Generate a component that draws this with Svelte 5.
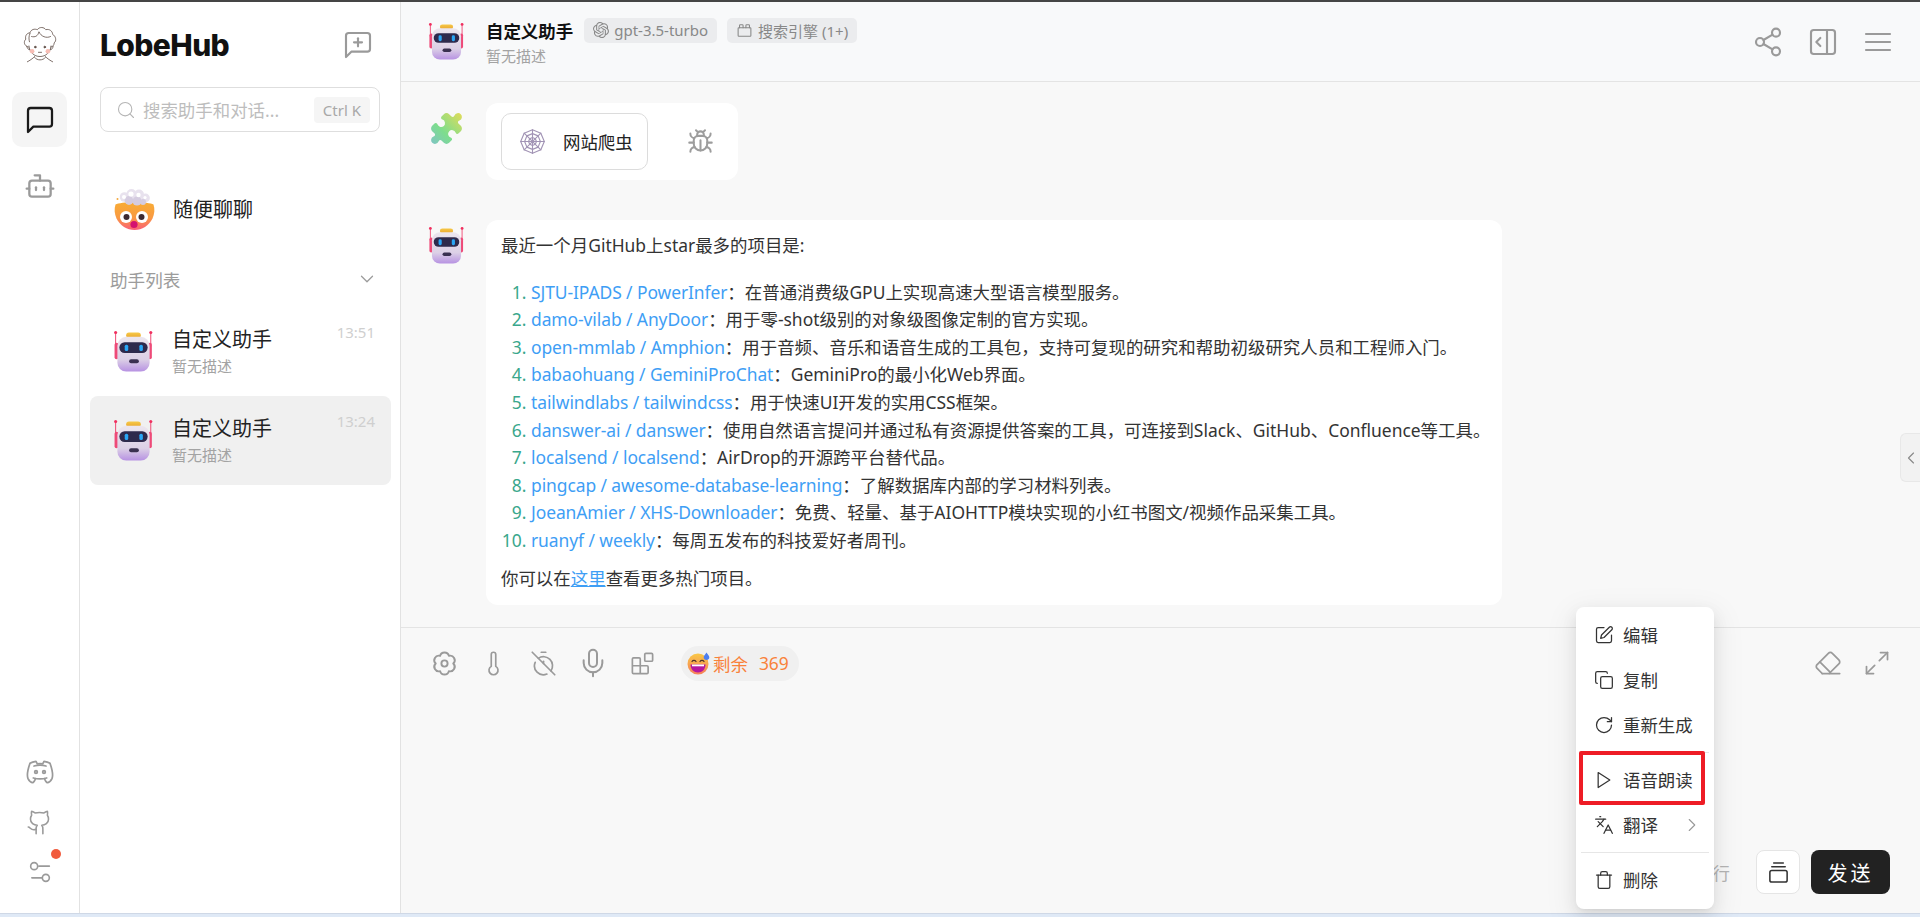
<script lang="ts">
  const circle = (x: number, y: number, r: number) =>
    `M${x - r} ${y}a${r} ${r} 0 1 0 ${2 * r} 0a${r} ${r} 0 1 0 ${-2 * r} 0`;

  const paths: Record<string, string[]> = {
    chat: ["M21 15a2 2 0 0 1-2 2H7l-4 4V5a2 2 0 0 1 2-2h14a2 2 0 0 1 2 2z"],
    chatPlus: ["M21 15a2 2 0 0 1-2 2H7l-4 4V5a2 2 0 0 1 2-2h14a2 2 0 0 1 2 2z", "M12 7v6", "M9 10h6"],
    bot: ["M12 8V4H8", "M6 8h12a2 2 0 0 1 2 2v8a2 2 0 0 1-2 2H6a2 2 0 0 1-2-2v-8a2 2 0 0 1 2-2z", "M2 14h2", "M20 14h2", "M15 13v2", "M9 13v2"],
    discord: [
      circle(9, 12, 1),
      circle(15, 12, 1),
      "M7.5 7.5c3.5-1 5.5-1 9 0",
      "M7 16.5c3.5 1 6.5 1 10 0",
      "M15.5 17c0 1 1.5 3 2 3c1.5 0 2.833-1.667 3.5-3c.667-1.667.5-5.833-1.5-11.5c-1.457-1.015-3-1.34-4.5-1.5l-.972 1.923a11.913 11.913 0 0 0-4.053 0l-.975-1.923c-1.5.16-3.043.485-4.5 1.5c-2 5.667-2.167 9.833-1.5 11.5c.667 1.333 2 3 3.5 3c.5 0 2-2 2-3",
    ],
    github: [
      "M15 22v-4a4.8 4.8 0 0 0-1-3.5c3 0 6-2 6-5.5.08-1.25-.27-2.48-1-3.5.28-1.15.28-2.35 0-3.5 0 0-1 0-3 1.5-2.64-.5-5.36-.5-8 0C6 2 5 2 5 2c-.3 1.15-.3 2.35 0 3.5A5.403 5.403 0 0 0 4 9c0 3.5 3 5.5 6 5.5-.39.49-.68 1.05-.85 1.65-.17.6-.22 1.23-.15 1.85v4",
      "M9 18c-4.51 2-5-2-7-2",
    ],
    sliders: ["M20 7h-9", "M14 17H5", circle(17, 17, 3), circle(7, 7, 3)],
    search: [circle(11, 11, 8), "m21 21-4.3-4.3"],
    down: ["m6 9 6 6 6-6"],
    right: ["m9 18 6-6-6-6"],
    left: ["m15 18-6-6 6-6"],
    share: [circle(18, 5, 3), circle(6, 12, 3), circle(18, 19, 3), "M8.59 13.51 15.42 17.49", "M15.41 6.51 8.59 10.49"],
    panel: ["M5 3h14a2 2 0 0 1 2 2v14a2 2 0 0 1-2 2H5a2 2 0 0 1-2-2V5a2 2 0 0 1 2-2z", "M15 3v18", "m10 15-3-3 3-3"],
    menu: ["M3 6h18", "M3 12h18", "M3 18h18"],
    brick: ["M4 8h16a1 1 0 0 1 1 1v10a1 1 0 0 1-1 1H4a1 1 0 0 1-1-1V9a1 1 0 0 1 1-1z", "M10 8V5c0-.6-.4-1-1-1H6a1 1 0 0 0-1 1v3", "M19 8V5c0-.6-.4-1-1-1h-3a1 1 0 0 0-1 1v3"],
    bug: [
      "m8 2 1.88 1.88", "M14.12 3.88 16 2", "M9 7.13v-1a3.003 3.003 0 1 1 6 0v1",
      "M12 20c-3.3 0-6-2.7-6-6v-3a4 4 0 0 1 4-4h4a4 4 0 0 1 4 4v3c0 3.3-2.7 6-6 6",
      "M12 20v-9", "M6.53 9C4.6 8.8 3 7.1 3 5", "M6 13H2", "M3 21c0-2.1 1.7-3.9 3.8-4",
      "M20.97 5c0 2.1-1.6 3.8-3.5 4", "M22 13h-4", "M17.2 17c2.1.1 3.8 1.9 3.8 4",
    ],
    // petal outline with a small cog inside
    flower: [
      "M15.4 6.1A3.5 3.5 0 0 1 18.8 12A3.5 3.5 0 0 1 15.4 17.9A3.5 3.5 0 0 1 8.6 17.9A3.5 3.5 0 0 1 5.2 12A3.5 3.5 0 0 1 8.6 6.1A3.5 3.5 0 0 1 15.4 6.1Z",
      circle(12, 12, 2.4),
    ],
    thermo: ["M14 4v10.54a4 4 0 1 1-4 0V4a2 2 0 0 1 4 0Z"],
    timerOff: ["M10 2h4", "M4.6 11a8 8 0 0 0 1.7 8.7 8 8 0 0 0 8.7 1.7", "M7.4 7.4a8 8 0 0 1 10.3 1 8 8 0 0 1 .9 10.2", "m2 2 20 20", "M12 12v-2"],
    mic: ["M12 2a3 3 0 0 0-3 3v7a3 3 0 0 0 6 0V5a3 3 0 0 0-3-3Z", "M19 10v2a7 7 0 0 1-14 0v-2", "M12 19v3"],
    blocks: ["M15 3h5a1 1 0 0 1 1 1v5a1 1 0 0 1-1 1h-5a1 1 0 0 1-1-1V4a1 1 0 0 1 1-1z", "M10 21V8a1 1 0 0 0-1-1H4a1 1 0 0 0-1 1v12a1 1 0 0 0 1 1h12a1 1 0 0 0 1-1v-5a1 1 0 0 0-1-1H3"],
    eraser: ["m7 21-4.3-4.3c-1-1-1-2.5 0-3.4l9.6-9.6c1-1 2.5-1 3.4 0l5.6 5.6c1 1 1 2.5 0 3.4L13 21", "M22 21H7", "m5 11 9 9"],
    expand: ["M15 3h6v6", "m21 3-7 7", "m3 21 7-7", "M9 21H3v-6"],
    edit: ["M12 3H5a2 2 0 0 0-2 2v14a2 2 0 0 0 2 2h14a2 2 0 0 0 2-2v-7", "M18.375 2.625a2.121 2.121 0 1 1 3 3L12 15l-4 1 1-4Z"],
    copy: ["M10 8h10a2 2 0 0 1 2 2v10a2 2 0 0 1-2 2H10a2 2 0 0 1-2-2V10a2 2 0 0 1 2-2z", "M4 16c-1.1 0-2-.9-2-2V4c0-1.1.9-2 2-2h10c1.1 0 2 .9 2 2"],
    redo: ["M21 12a9 9 0 1 1-9-9c2.52 0 4.93 1 6.74 2.74L21 8", "M21 3v5h-5"],
    play: ["M5 3l14 9-14 9z"],
    lang: ["m5 8 6 6", "m4 14 6-6 2-3", "M2 5h12", "M7 2h1", "m22 22-5-10-5 10", "M14 18h6"],
    trash: ["M3 6h18", "M19 6v14c0 1-1 2-2 2H7c-1 0-2-1-2-2V6", "M8 6V4c0-1 1-2 2-2h4c1 0 2 1 2 2v2"],
    gallery: ["M7 2h10", "M5 6h14", "M5 10h14a2 2 0 0 1 2 2v8a2 2 0 0 1-2 2H5a2 2 0 0 1-2-2v-8a2 2 0 0 1 2-2z"],
    web: [
      "M12 1.5 19.4 4.6 22.5 12 19.4 19.4 12 22.5 4.6 19.4 1.5 12 4.6 4.6Z",
      "M12 5 17 7 19 12 17 17 12 19 7 17 5 12 7 7Z",
      "M12 8.5 14.5 9.5 15.5 12 14.5 14.5 12 15.5 9.5 14.5 8.5 12 9.5 9.5Z",
      "M12 1.5v21", "M1.5 12h21", "M4.6 4.6l14.8 14.8", "M19.4 4.6 4.6 19.4",
    ],
  };

  const openai =
    "M22.2819 9.8211a5.9847 5.9847 0 0 0-.5157-4.9108 6.0462 6.0462 0 0 0-6.5098-2.9A6.0651 6.0651 0 0 0 4.9807 4.1818a5.9847 5.9847 0 0 0-3.9977 2.9 6.0462 6.0462 0 0 0 .7427 7.0966 5.98 5.98 0 0 0 .511 4.9107 6.051 6.051 0 0 0 6.5146 2.9001A5.9847 5.9847 0 0 0 13.2599 24a6.0557 6.0557 0 0 0 5.7718-4.2058 5.9894 5.9894 0 0 0 3.9977-2.9001 6.0557 6.0557 0 0 0-.7475-7.0729zm-9.022 12.6081a4.4755 4.4755 0 0 1-2.8764-1.0408l.1419-.0804 4.7783-2.7582a.7948.7948 0 0 0 .3927-.6813v-6.7369l2.02 1.1686a.071.071 0 0 1 .038.052v5.5826a4.504 4.504 0 0 1-4.4945 4.4944zm-9.6607-4.1254a4.4708 4.4708 0 0 1-.5346-3.0137l.142.0852 4.783 2.7582a.7712.7712 0 0 0 .7806 0l5.8428-3.3685v2.3324a.0804.0804 0 0 1-.0332.0615L9.74 19.9502a4.4992 4.4992 0 0 1-6.1408-1.6464zM2.3408 7.8956a4.485 4.485 0 0 1 2.3655-1.9728V11.6a.7664.7664 0 0 0 .3879.6765l5.8144 3.3543-2.0201 1.1685a.0757.0757 0 0 1-.071 0l-4.8303-2.7865A4.504 4.504 0 0 1 2.3408 7.872zm16.5963 3.8558L13.1038 8.364 15.1192 7.2a.0757.0757 0 0 1 .071 0l4.8303 2.7913a4.4944 4.4944 0 0 1-.6765 8.1042v-5.6772a.79.79 0 0 0-.407-.667zm2.0107-3.0231l-.142-.0852-4.7735-2.7818a.7759.7759 0 0 0-.7854 0L9.409 9.2297V6.8974a.0662.0662 0 0 1 .0284-.0615l4.8303-2.7866a4.4992 4.4992 0 0 1 6.6802 4.66zM8.3065 12.863l-2.02-1.1638a.0804.0804 0 0 1-.038-.0567V6.0742a4.4992 4.4992 0 0 1 7.3757-3.4537l-.142.0805L8.704 5.459a.7948.7948 0 0 0-.3927.6813zm1.0976-2.3654l2.602-1.4998 2.6069 1.4998v2.9994l-2.5974 1.4997-2.6067-1.4997Z";

  const puzzle =
    "M19.439 7.85c-.049.322.059.648.289.878l1.568 1.568c.47.47.706 1.087.706 1.704s-.235 1.233-.706 1.704l-1.611 1.611a.98.98 0 0 1-.837.276c-.47-.07-.802-.48-.968-.925a2.501 2.501 0 1 0-3.214 3.214c.446.166.855.497.925.968a.979.979 0 0 1-.276.837l-1.61 1.61a2.404 2.404 0 0 1-1.705.707 2.402 2.402 0 0 1-1.704-.706l-1.568-1.568a1.026 1.026 0 0 0-.877-.29c-.493.074-.84.504-1.02.968a2.5 2.5 0 1 1-3.237-3.237c.464-.18.894-.527.967-1.02a1.026 1.026 0 0 0-.289-.877l-1.568-1.568A2.402 2.402 0 0 1 1.998 12c0-.617.236-1.234.706-1.704L4.23 8.77c.24-.24.581-.353.917-.303.515.077.877.528 1.073 1.01a2.5 2.5 0 1 0 3.259-3.259c-.482-.196-.933-.558-1.01-1.073-.05-.336.062-.676.303-.917l1.525-1.525A2.402 2.402 0 0 1 12 1.998c.617 0 1.234.236 1.704.706l1.568 1.568c.23.23.556.338.877.29.493-.074.84-.504 1.02-.968a2.5 2.5 0 1 1 3.237 3.237c-.464.18-.894.527-.967 1.02Z";

  const sessions = [
    { time: "13:51", active: false },
    { time: "13:24", active: true },
  ];

  const projects = [
    ["SJTU-IPADS / PowerInfer", "：在普通消费级GPU上实现高速大型语言模型服务。"],
    ["damo-vilab / AnyDoor", "：用于零-shot级别的对象级图像定制的官方实现。"],
    ["open-mmlab / Amphion", "：用于音频、音乐和语音生成的工具包，支持可复现的研究和帮助初级研究人员和工程师入门。"],
    ["babaohuang / GeminiProChat", "：GeminiPro的最小化Web界面。"],
    ["tailwindlabs / tailwindcss", "：用于快速UI开发的实用CSS框架。"],
    ["danswer-ai / danswer", "：使用自然语言提问并通过私有资源提供答案的工具，可连接到Slack、GitHub、Confluence等工具。"],
    ["localsend / localsend", "：AirDrop的开源跨平台替代品。"],
    ["pingcap / awesome-database-learning", "：了解数据库内部的学习材料列表。"],
    ["JoeanAmier / XHS-Downloader", "：免费、轻量、基于AIOHTTP模块实现的小红书图文/视频作品采集工具。"],
    ["ruanyf / weekly", "：每周五发布的科技爱好者周刊。"],
  ];

  const inputTools = [
    { name: "flower", size: 31 },
    { name: "thermo", size: 27 },
    { name: "timerOff", size: 27 },
    { name: "mic", size: 32 },
    { name: "blocks", size: 27 },
  ];
</script>

{#snippet icon(name: string, size: number, sw = 1.6)}
  <svg class="ic" width={size} height={size} viewBox="0 0 24 24" fill="none" stroke="currentColor" stroke-width={sw} stroke-linecap="round" stroke-linejoin="round">
    {#each paths[name] as d}<path {d} />{/each}
  </svg>
{/snippet}

{#snippet robot(size: number)}
  <svg class="ic" width={size} height={size} viewBox="8 11 42 42">
    <path d="M10.7 13v14M46.7 13v14" stroke="#f0446f" stroke-width="1" fill="none" />
    <circle cx="10.7" cy="12.6" r="1.6" fill="#f0305f" />
    <circle cx="46.7" cy="12.6" r="1.6" fill="#f0305f" />
    <rect x="9.6" y="23" width="4" height="17" rx="2" fill="#ee4a78" />
    <rect x="43.800" y="23" width="4" height="17" rx="2" fill="#ee4a78" />
    <rect x="21.5" y="12.6" width="15" height="5.6" rx="2.8" fill="url(#capGrad)" />
    <rect x="12.500" y="17" width="33" height="35.500" rx="9" fill="url(#botGrad)" />
    <rect x="14.500" y="22.500" width="29" height="11" rx="5.500" fill="#2e2a4c" />
    <rect x="20" y="25" width="3.600" height="6.600" rx="1.600" fill="#2aa6f5" />
    <rect x="35" y="25" width="3.600" height="6.600" rx="1.600" fill="#2aa6f5" />
    <rect x="24.500" y="40" width="10" height="4" rx="2" fill="#3a3050" />
  </svg>
{/snippet}

{#snippet blown()}
  <svg class="ic" width="41" height="41" viewBox="0 0 41 41">
    <path d="M1.500 15.500C6 12.500 35 12.500 39.500 15.500 41 20 40.500 25 38.500 29.500 35 36.500 28 41 20.500 41S6 36.500 2.500 29.500C.5 25 0 20 1.500 15.500z" fill="url(#faceGrad)" />
    <g fill="#e8e2ee">
      <circle cx="10.500" cy="8" r="4.800" /><circle cx="17.500" cy="5" r="5" /><circle cx="25" cy="5.500" r="5" /><circle cx="31.500" cy="9" r="4.400" />
      <circle cx="15" cy="11.500" r="4.400" fill="#d5cce0" /><circle cx="23" cy="12" r="4.600" fill="#d5cce0" /><circle cx="29" cy="13" r="3" fill="#d5cce0" />
    </g>
    <g fill="#fff">
      <circle cx="17" cy="5" r="2.600" /><circle cx="24.500" cy="6" r="2.200" /><circle cx="10" cy="8" r="2" /><circle cx="31" cy="8.500" r="1.600" />
    </g>
    <circle cx="3.500" cy="10" r="1" fill="#f3a83d" />
    <circle cx="12" cy="28" r="6" fill="#fff" /><circle cx="28" cy="28" r="6" fill="#fff" />
    <circle cx="12.500" cy="28" r="3" fill="#3d2a32" /><circle cx="27.500" cy="28" r="3" fill="#3d2a32" />
    <circle cx="20" cy="35.500" r="3.600" fill="#d41270" />
  </svg>
{/snippet}

<svg class="defs" aria-hidden="true">
  <defs>
    <linearGradient id="botGrad" x1="0" y1="0" x2="0" y2="1">
      <stop offset="0" stop-color="#ece6ee" /><stop offset=".65" stop-color="#dcd0e6" /><stop offset="1" stop-color="#b792e2" />
    </linearGradient>
    <linearGradient id="capGrad" x1="0" y1="0" x2="0" y2="1">
      <stop offset="0" stop-color="#f7c948" /><stop offset="1" stop-color="#e8a52e" />
    </linearGradient>
    <linearGradient id="faceGrad" x1="0" y1="0" x2="0" y2="1">
      <stop offset="0" stop-color="#f8ac35" /><stop offset=".55" stop-color="#f99a42" /><stop offset="1" stop-color="#fa5f78" />
    </linearGradient>
    <linearGradient id="puzzleGrad" x1="1" y1="0" x2="0" y2="1">
      <stop offset="0" stop-color="#e2dc58" /><stop offset=".6" stop-color="#7ddd8d" /><stop offset="1" stop-color="#7fc4c4" />
    </linearGradient>
    <linearGradient id="smileGrad" x1="0" y1="0" x2="0" y2="1">
      <stop offset="0" stop-color="#f9c846" /><stop offset="1" stop-color="#f6805a" />
    </linearGradient>
  </defs>
</svg>

<div class="page">
  <div class="topline"></div>
  <div class="app">
    <nav class="rail">
      <svg class="me" width="34" height="40" viewBox="0 0 32 38" fill="none" stroke="#5e4c44" stroke-width=".75" stroke-linecap="round" stroke-linejoin="round">
        <path d="M5 20C1 19 0 15 2.500 12.500 1.500 9 4 6.500 6.500 6.500 7.500 3 11 2.500 13.500 3.500 15.500 .5 20 1 21.500 3.500 25 2.500 28 5 28 8 31 9.500 32 14 29.500 16 29.500 18 28 20 26.500 20" />
        <path d="M6.500 7c-1.500 3-1 6-.5 8M8 10c3.500 1 6-.5 7-4.500 2 4.500 7 6.500 11 4.500" />
        <path d="M5.500 19c.5 6 5 10 10.500 10s10-4 10.500-10" />
        <path d="M3.500 19.500c.5 2 1.500 3 2.500 3M28.500 19.500c-.5 2-1.500 3-2.500 3" />
        <circle cx="11.500" cy="20" r=".8" fill="#5c4a42" />
        <circle cx="20.500" cy="20" r=".8" fill="#5c4a42" />
        <path d="M14.500 25h3" />
        <circle cx="8.500" cy="24" r="2.200" fill="#f8bdb4" stroke="none" />
        <circle cx="23.500" cy="24" r="2.200" fill="#f8bdb4" stroke="none" />
        <path d="M11 29c-2 2-5 4-7 5M21 29c2 2 5 4 7 5M11 30c2 3 8 3 10 0" />
      </svg>
      <button class="rail-btn active">{@render icon("chat", 32, 1.7)}</button>
      <button class="rail-btn">{@render icon("bot", 32, 1.7)}</button>
      <div class="rail-fill"></div>
      <button class="rail-btn low">{@render icon("discord", 32, 1.3)}</button>
      <button class="rail-btn low">{@render icon("github", 27, 1.4)}</button>
      <button class="rail-btn low dot">{@render icon("sliders", 28, 1.4)}</button>
    </nav>

    <aside class="panel">
      <div class="brand">
        <span class="logo">LobeHub</span>
        {@render icon("chatPlus", 32, 1.6)}
      </div>
      <div class="search">
        {@render icon("search", 20, 1.3)}
        <span class="placeholder">搜索助手和对话...</span>
        <span class="kbd">Ctrl K</span>
      </div>
      <div class="inbox">
        {@render blown()}
        <span class="item-title">随便聊聊</span>
      </div>
      <div class="list-head">
        <span>助手列表</span>
        {@render icon("down", 22, 1.4)}
      </div>
      {#each sessions as s (s.time)}
        <div class="session" class:active={s.active}>
          {@render robot(41)}
          <div class="session-text">
            <span class="item-title">自定义助手</span>
            <span class="item-sub">暂无描述</span>
          </div>
          <span class="time">{s.time}</span>
        </div>
      {/each}
    </aside>

    <main class="main">
      <header class="head">
        {@render robot(37)}
        <div class="head-text">
          <div class="head-row">
            <strong>自定义助手</strong>
            <span class="tag">
              <svg class="ic" width="16" height="16" viewBox="0 0 24 24" fill="currentColor"><path d={openai} /></svg>
              gpt-3.5-turbo
            </span>
            <span class="tag">{@render icon("brick", 17, 1.5)}搜索引擎 (1+)</span>
          </div>
          <span class="item-sub">暂无描述</span>
        </div>
        <div class="head-actions">
          {@render icon("share", 32, 1.6)}
          {@render icon("panel", 32, 1.6)}
          {@render icon("menu", 32, 1.6)}
        </div>
      </header>

      <section class="chat">
        <div class="msg">
          <svg class="ic" width="37" height="37" viewBox="0 0 24 24"><path d={puzzle} fill="url(#puzzleGrad)" /></svg>
          <div class="bubble plugin">
            <div class="plugin-card">
              <span class="web">{@render icon("web", 27, 1)}</span>
              网站爬虫
            </div>
            <span class="bug">{@render icon("bug", 27, 1.8)}</span>
          </div>
        </div>
        <div class="msg">
          {@render robot(37)}
          <div class="bubble answer">
            <p>最近一个月GitHub上star最多的项目是:</p>
            <ol>
              {#each projects as [name, desc] (name)}
                <li><span class="link name">{name}</span>{desc}</li>
              {/each}
            </ol>
            <p class="tail">你可以在<span class="link under">这里</span>查看更多热门项目。</p>
          </div>
        </div>
      </section>

      <section class="composer">
        <div class="tools">
          {#each inputTools as t (t.name)}
            <span class="tool">{@render icon(t.name, t.size, 1.5)}</span>
          {/each}
          <span class="quota">
            <svg class="ic" width="23" height="23" viewBox="0 0 23 23">
              <circle cx="11" cy="12" r="10.500" fill="url(#smileGrad)" />
              <path d="M5 9.500c1-1.600 3-1.600 4 0M13 9.500c1-1.600 3-1.600 4 0" stroke="#4a2f2a" stroke-width="1.200" fill="none" stroke-linecap="round" />
              <path d="M3.500 12.500h15c0 5-3.500 8-7.500 8s-7.500-3-7.500-8z" fill="#b5179e" />
              <path d="M5 12.500h12v1.800H5z" fill="#fff" />
              <path d="M19.500 .5c1.500 2 2.800 3.500 2.800 5s-1.300 2.500-2.800 2.500-2.800-1-2.800-2.500 1.300-3 2.800-5z" fill="#4d7ff0" />
            </svg>
            <span>剩余</span>
            <span class="num">369</span>
          </span>
          <span class="tools-fill"></span>
          <span class="tool">{@render icon("eraser", 28, 1.5)}</span>
          <span class="tool">{@render icon("expand", 28, 1.5)}</span>
        </div>
        <div class="send-row">
          <span class="hint">行</span>
          <button class="split">{@render icon("gallery", 23, 1.6)}</button>
          <button class="send">发送</button>
        </div>
      </section>

      <button class="handle">{@render icon("left", 20, 1.4)}</button>
    </main>
  </div>
  <div class="bottomline"></div>

  <div class="popup">
    <div class="pop-item">{@render icon("edit", 20, 1.5)}编辑</div>
    <div class="pop-item">{@render icon("copy", 20, 1.5)}复制</div>
    <div class="pop-item">{@render icon("redo", 20, 1.5)}重新生成</div>
    <div class="pop-sep"></div>
    <div class="pop-item">{@render icon("play", 20, 1.5)}语音朗读</div>
    <div class="pop-item">{@render icon("lang", 20, 1.5)}翻译<span class="pop-more">{@render icon("right", 22, 1.2)}</span></div>
    <div class="pop-sep"></div>
    <div class="pop-item">{@render icon("trash", 20, 1.5)}删除</div>
    <div class="redbox"></div>
  </div>
</div>

<style>
  :global(body) {
    margin: 0;
    background: #fff;
  }
  .defs {
    display: block;
    width: 0;
    height: 0;
  }
  .page {
    position: relative;
    display: flex;
    flex-direction: column;
    height: 917px;
    overflow: hidden;
    font-family: "Noto Sans", "Noto Sans CJK SC", sans-serif;
    font-size: 17.45px;
    color: #222;
  }
  .ic {
    display: block;
    flex: none;
  }
  button {
    padding: 0;
    border: none;
    background: none;
    font: inherit;
    color: inherit;
  }
  .topline {
    height: 2px;
    background: #454545;
  }
  .bottomline {
    height: 4px;
    background: #dfe9f6;
    border-top: 1px solid #cfd8e6;
    box-sizing: border-box;
  }
  .app {
    flex: 1;
    display: flex;
    min-height: 0;
  }

  .rail {
    width: 80px;
    box-sizing: border-box;
    border-right: 1px solid #e2e2e2;
    display: flex;
    flex-direction: column;
    align-items: center;
    flex: none;
    background: #fff;
  }
  .me {
    margin: 24px 0 26px;
  }
  .rail-btn {
    width: 55px;
    height: 55px;
    display: flex;
    align-items: center;
    justify-content: center;
    border-radius: 10px;
    color: #9a9a9a;
    margin-bottom: 11px;
    position: relative;
  }
  .rail-btn.active {
    background: #f5f5f5;
    color: #1a1a1a;
  }
  .rail-fill {
    flex: 1;
  }
  .rail-btn.low {
    height: 50px;
    margin-bottom: 0;
  }
  .rail-btn.dot {
    margin-bottom: 16px;
  }
  .rail-btn.dot::after {
    content: "";
    position: absolute;
    left: 39px;
    top: 2px;
    width: 10px;
    height: 10px;
    border-radius: 50%;
    background: #f15b3d;
  }

  .panel {
    width: 321px;
    flex: none;
    box-sizing: border-box;
    border-right: 1px solid #e2e2e2;
    padding: 0 10px;
    background: #fff;
  }
  .brand {
    display: flex;
    align-items: center;
    justify-content: space-between;
    height: 85px;
    padding: 0 16px 0 10px;
    color: #9a9a9a;
  }
  .logo {
    font-family: Inter, sans-serif;
    font-size: 30px;
    font-weight: 800;
    letter-spacing: -0.6px;
    color: #111;
  }
  .search {
    display: flex;
    align-items: center;
    height: 45px;
    margin: 0 10px 0 10px;
    padding: 0 9px 0 15px;
    box-sizing: border-box;
    border: 1px solid #dedede;
    border-radius: 8px;
    color: #b5b5b5;
    gap: 7px;
  }
  .placeholder {
    flex: 1;
    color: #bdbdbd;
  }
  .kbd {
    background: #f5f5f5;
    border-radius: 4px;
    padding: 0 9px;
    font-size: 15px;
    line-height: 26px;
    color: #a8a8a8;
  }
  .inbox {
    display: flex;
    align-items: center;
    gap: 18px;
    height: 88px;
    margin-top: 33px;
    padding-left: 24px;
  }
  .item-title {
    font-size: 20px;
    line-height: 27px;
    color: #222;
  }
  .item-sub {
    font-size: 15px;
    line-height: 20px;
    color: #a3a3a3;
  }
  .list-head {
    display: flex;
    align-items: center;
    justify-content: space-between;
    height: 30px;
    margin-top: 11px;
    margin-bottom: 13px;
    padding: 0 12px 0 20px;
    color: #9c9c9c;
    font-size: 17.6px;
  }
  .session {
    display: flex;
    align-items: center;
    gap: 18px;
    height: 89px;
    margin-right: -1px;
    padding: 0 16px 0 23px;
    box-sizing: border-box;
    border-radius: 8px;
    position: relative;
  }
  .session.active {
    background: #f0f0f0;
  }
  .session-text {
    display: flex;
    flex-direction: column;
    gap: 3px;
    margin-top: -2px;
  }
  .time {
    position: absolute;
    right: 16px;
    top: 15px;
    font-size: 15px;
    color: #cfcfcf;
  }

  .main {
    flex: 1;
    min-width: 0;
    display: flex;
    flex-direction: column;
    background: #f8f8f8;
    position: relative;
  }
  .head {
    height: 80px;
    box-sizing: border-box;
    border-bottom: 1px solid #e4e4e4;
    display: flex;
    align-items: center;
    padding: 0 26px 0 27px;
    gap: 21px;
    background: #f8f9fa;
  }
  .head-text {
    flex: 1;
    display: flex;
    flex-direction: column;
    gap: 3px;
  }
  .head-row {
    display: flex;
    align-items: center;
    gap: 10px;
  }
  .head-row strong {
    font-weight: 700;
    color: #111;
    margin-right: 1px;
  }
  .tag {
    display: inline-flex;
    align-items: center;
    gap: 5px;
    height: 25px;
    padding: 0 9px;
    background: #ebecee;
    border-radius: 5px;
    font-size: 15px;
    color: #888;
  }
  .head-actions {
    display: flex;
    gap: 23px;
    color: #9a9a9a;
  }

  .chat {
    padding: 21px 0 0 27px;
    display: flex;
    flex-direction: column;
    gap: 40px;
  }
  .msg {
    display: flex;
    gap: 21px;
    align-items: flex-start;
  }
  .msg > .ic {
    margin-top: 7px;
  }
  .bubble {
    background: #fff;
    border-radius: 12px;
  }
  .plugin {
    width: 252px;
    height: 77px;
    box-sizing: border-box;
    padding: 10px 15px;
    display: flex;
    align-items: center;
    gap: 39px;
  }
  .plugin-card {
    display: flex;
    align-items: center;
    gap: 17px;
    width: 147px;
    height: 57px;
    flex: none;
    box-sizing: border-box;
    padding-left: 17px;
    border: 1px solid #dcdcdc;
    border-radius: 10px;
  }
  .web {
    color: #a294b5;
  }
  .bug {
    color: #9d9d9d;
  }
  .answer {
    width: 1016px;
    box-sizing: border-box;
    padding: 12px 15px 12.5px;
    line-height: 27.6px;
    color: #333;
  }
  .answer p {
    margin: 0;
  }
  .answer ol {
    margin: 19px 0 10px;
    padding-left: 30px;
  }
  .answer li {
    white-space: nowrap;
  }
  .answer li::marker {
    color: #3aa78c;
  }
  .link {
    color: #3e9ef5;
  }
  .name {
    letter-spacing: -0.08px;
  }
  .under {
    text-decoration: underline;
  }

  .composer {
    position: absolute;
    left: 0;
    right: 0;
    bottom: 0;
    height: 286px;
    box-sizing: border-box;
    border-top: 1px solid #e4e4e4;
    display: flex;
    flex-direction: column;
    justify-content: space-between;
    padding: 17.5px 0 19px;
  }
  .tools {
    display: flex;
    align-items: center;
    padding: 0 18px 0 18.5px;
    color: #9a9a9a;
  }
  .tool {
    width: 49.5px;
    display: flex;
    justify-content: center;
  }
  .quota {
    display: inline-flex;
    align-items: center;
    gap: 3px;
    width: 118px;
    box-sizing: border-box;
    height: 35px;
    padding: 0 0 0 6px;
    margin-left: 14px;
    border-radius: 18px;
    background: #f0f0f0;
    color: #f9823a;
  }
  .quota .num {
    margin-left: 8px;
  }
  .tools-fill {
    flex: 1;
  }
  .send-row {
    display: flex;
    align-items: center;
    justify-content: flex-end;
    gap: 11px;
    padding-right: 30px;
  }
  .hint {
    margin-right: 15px;
    color: #b5b5b5;
  }
  .split {
    width: 44px;
    height: 44px;
    display: flex;
    align-items: center;
    justify-content: center;
    background: #fff;
    border: 1px solid #e5e5e5;
    border-radius: 8px;
    box-sizing: border-box;
    color: #333;
  }
  .send {
    width: 79px;
    height: 44px;
    border-radius: 8px;
    background: #222;
    color: #fff;
    font-size: 20px;
    letter-spacing: 3px;
  }
  .handle {
    position: absolute;
    right: 0;
    top: 431px;
    width: 20px;
    height: 49px;
    display: flex;
    align-items: center;
    justify-content: center;
    box-sizing: border-box;
    background: #f2f2f2;
    border: 1px solid #e8e8e8;
    border-right: none;
    border-radius: 6px 0 0 6px;
    color: #8a8a8a;
  }

  .popup {
    position: absolute;
    left: 1576px;
    top: 607px;
    width: 138px;
    box-sizing: border-box;
    padding: 5px 0 7px;
    background: #fff;
    border-radius: 8px;
    box-shadow: 0 6px 16px rgba(0, 0, 0, 0.08), 0 3px 6px -4px rgba(0, 0, 0, 0.12), 0 9px 28px 8px rgba(0, 0, 0, 0.05);
  }
  .pop-item {
    display: flex;
    align-items: center;
    height: 45px;
    padding-left: 18px;
    gap: 9px;
    color: #333;
    white-space: nowrap;
  }
  .pop-sep {
    height: 1px;
    margin: 5px 5px 4px;
    background: #e6e6e6;
  }
  .pop-more {
    margin-left: 14px;
    color: #999;
  }
  .redbox {
    position: absolute;
    left: 3px;
    top: 144px;
    width: 126px;
    height: 54px;
    box-sizing: border-box;
    border: 4px solid #ee1c25;
    border-radius: 2px;
  }
</style>
